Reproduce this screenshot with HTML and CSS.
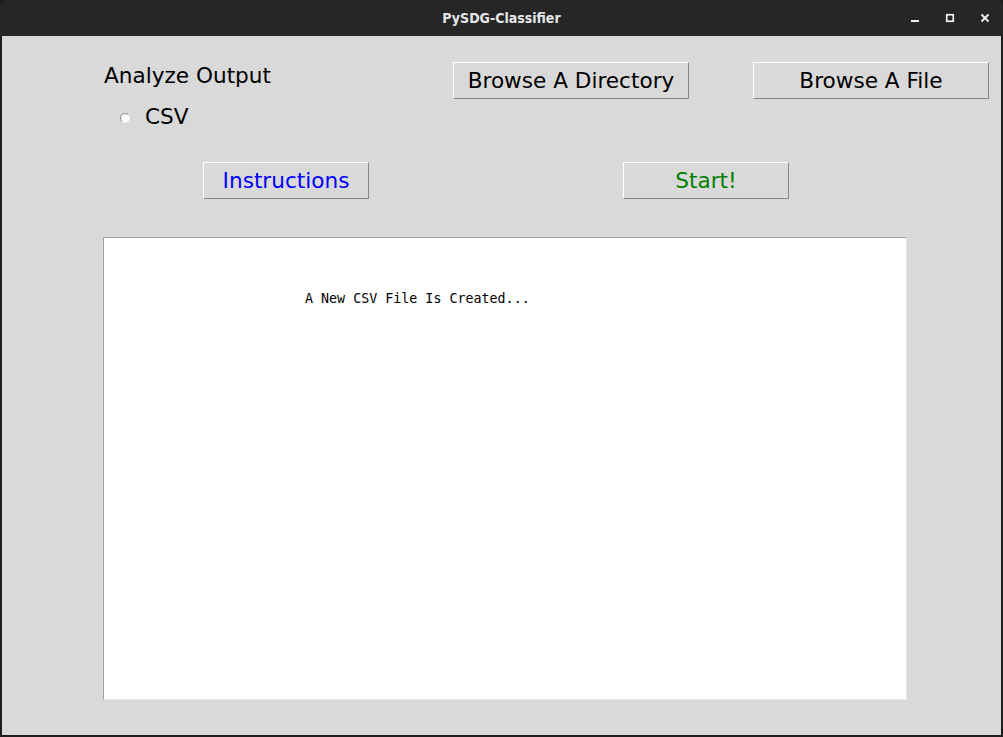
FILE: index.html
```html
<!DOCTYPE html>
<html>
<head>
<meta charset="utf-8">
<title>PySDG-Classifier</title>
<link rel="stylesheet" href="styles.css">
</head>
<body>
<div class="window">
  <div class="titlebar">
    <div class="tb-spacer"></div>
    <div class="tb-title">PySDG-Classifier</div>
    <div class="tb-controls">
      <svg class="ctl" width="12" height="12" viewBox="0 0 12 12"><rect x="2" y="8" width="8" height="2" fill="#f2f2f2"/></svg>
      <svg class="ctl" width="12" height="12" viewBox="0 0 12 12"><rect x="2.75" y="2.75" width="6.5" height="6.5" fill="none" stroke="#f2f2f2" stroke-width="1.7"/></svg>
      <svg class="ctl" width="12" height="12" viewBox="0 0 12 12"><path d="M2.5 2.5 L9.5 9.5 M9.5 2.5 L2.5 9.5" stroke="#f2f2f2" stroke-width="1.8"/></svg>
    </div>
  </div>
  <div class="content">
    <div class="top">
      <div class="left-col">
        <div class="label">Analyze Output</div>
        <div class="radio-row">
          <span class="radio"></span>
          <span class="radio-text">CSV</span>
        </div>
      </div>
      <button class="tk-btn btn-dir">Browse A Directory</button>
      <button class="tk-btn btn-file">Browse A File</button>
    </div>
    <div class="actions">
      <button class="tk-btn small-btn blue">Instructions</button>
      <button class="tk-btn small-btn green">Start!</button>
    </div>
    <div class="textbox">
      <div class="log">A New CSV File Is Created...</div>
    </div>
  </div>
</div>
</body>
</html>
```
FILE: styles.css
```css
html, body {
  margin: 0;
  padding: 0;
  background: #1e1e1e;
}
.window {
  width: 1003px;
  height: 737px;
  background: #1e1e1e;
  display: flex;
  flex-direction: column;
  overflow: hidden;
}
.titlebar {
  height: 36px;
  flex: none;
  background: #262626;
  border-radius: 7px 7px 0 0;
  display: grid;
  grid-template-columns: 1fr auto 1fr;
  align-items: center;
}
.tb-title {
  font-family: "DejaVu Sans Condensed", "DejaVu Sans", sans-serif;
  font-stretch: condensed;
  font-weight: bold;
  font-size: 14px;
  color: #e6e6e6;
  padding-bottom: 1px;
}
.tb-controls {
  display: flex;
  justify-content: flex-end;
  gap: 23px;
  padding-right: 12px;
}
.ctl { display: block; }
.content {
  flex: 1;
  margin: 0 2px 2px 2px;
  background: #d9d9d9;
  padding-top: 26px;
  font-family: "DejaVu Sans", sans-serif;
}
.top {
  display: grid;
  grid-template-columns: 451px 236px 64px 236px;
  align-items: start;
}
.left-col {
  padding-left: 102px;
  margin-top: 1px;
}
.label {
  font-size: 21.6px;
  line-height: 25px;
  color: #000;
}
.radio-row {
  margin-top: 16px;
  height: 25px;
  display: flex;
  align-items: center;
  font-size: 21.6px;
  line-height: 25px;
}
.radio {
  width: 10px;
  height: 10px;
  margin-left: 16px;
  margin-top: 2px;
  border-radius: 50%;
  background: #fff;
  box-sizing: border-box;
  border: 1px solid;
  border-color: #8a8a8a #f0f0f0 #f0f0f0 #8a8a8a;
}
.radio-text {
  margin-left: 15px;
}
.tk-btn {
  box-sizing: border-box;
  height: 37px;
  padding: 0;
  margin: 0;
  background: #d9d9d9;
  border: 1px solid;
  border-color: #ffffff #888888 #888888 #ffffff;
  font-family: "DejaVu Sans", sans-serif;
  font-size: 21.6px;
  line-height: 25px;
  color: #000;
  text-align: center;
}
.btn-dir { grid-column: 2; }
.btn-file { grid-column: 4; }
.actions {
  margin-top: 33px;
  padding-left: 201px;
  display: flex;
  gap: 254px;
}
.small-btn { width: 166px; }
.blue { color: #0000ff; }
.green { color: #008000; }
.textbox {
  margin-top: 38px;
  margin-left: 101px;
  width: 804px;
  height: 463px;
  box-sizing: border-box;
  background: #fff;
  border: 1px solid;
  border-color: #a0a0a0 #e8e8e8 #e8e8e8 #a0a0a0;
  padding-top: 53px;
  padding-left: 201px;
}
.log {
  font-family: "DejaVu Sans Mono", monospace;
  font-size: 13.33px;
  line-height: 16px;
  color: #000;
  white-space: pre;
}
```
